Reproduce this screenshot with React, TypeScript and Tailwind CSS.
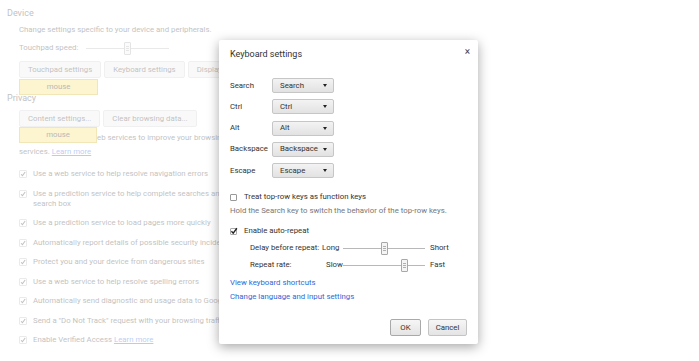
import React from 'react'

const checks = [
  ['Use a web service to help resolve navigation errors'],
  ['Use a prediction service to help complete searches and URLs typed in the address bar or the app launcher', 'search box'],
  ['Use a prediction service to load pages more quickly'],
  ['Automatically report details of possible security incidents to Google'],
  ['Protect you and your device from dangerous sites'],
  ['Use a web service to help resolve spelling errors'],
  ['Automatically send diagnostic and usage data to Google'],
  ['Send a "Do Not Track" request with your browsing traffic'],
]

const keys = ['Search', 'Ctrl', 'Alt', 'Backspace', 'Escape']

const Tick = ({ className = '' }: { className?: string }) => (
  <svg viewBox="0 0 10 10" className={className}>
    <path d="M1.8 5.4 L4 7.8 L8.6 1.6" fill="none" stroke="currentColor" strokeWidth="1.7" />
  </svg>
)

const GhostButton = ({ children }: { children: React.ReactNode }) => (
  <div className="h-[17px] px-[8px] flex items-center border border-[#d0d0d0] bg-[#ededed] rounded-[2px] whitespace-nowrap">
    {children}
  </div>
)

const Slider = ({ pos, width = 82 }: { pos: number; width?: number }) => (
  <div className="relative h-[14px] flex items-center" style={{ width }}>
    <div className="w-full h-px bg-[#b8b8b8]" />
    <div
      className="absolute top-[1px] w-[7px] h-[13px] border border-[#a8a8a8] bg-[#f5f5f5] rounded-[1px] flex flex-col items-center justify-center gap-[1px]"
      style={{ left: pos }}
    >
      <div className="w-[3px] h-px bg-[#b0b0b0]" />
      <div className="w-[3px] h-px bg-[#b0b0b0]" />
      <div className="w-[3px] h-px bg-[#b0b0b0]" />
    </div>
  </div>
)

const Select = ({ value }: { value: string }) => (
  <div className="w-[62px] h-[15px] flex items-center justify-between pl-[7px] pr-[6px] border border-[#c6c6c6] rounded-[2px] bg-gradient-to-b from-[#f3f3f3] to-[#e2e2e2] text-[#333]">
    <span>{value}</span>
    <span className="w-0 h-0 border-l-[2.5px] border-r-[2.5px] border-t-[3px] border-l-transparent border-r-transparent border-t-[#222]" />
  </div>
)

const BgCheck = () => (
  <div className="mt-[1px] w-[8px] h-[8px] border border-[#bbb] rounded-[1px] flex items-center justify-center text-[#333]">
    <Tick className="w-[8px] h-[8px]" />
  </div>
)

export default function App() {
  return (
    <div
      className="relative w-[699px] h-[361px] overflow-hidden bg-white text-[7.8px] leading-[10px]"
      style={{ fontFamily: 'Roboto, "Noto Sans", sans-serif' }}
    >
      {/* settings page behind the dialog */}
      <div className="opacity-30 text-[#303030] pt-[7px]">
        <div className="pl-[7px] text-[9px] leading-[12px]">Device</div>
        <div className="pl-[19px] pt-[6px] flex flex-col">
          <div className="whitespace-nowrap">Change settings specific to your device and peripherals.</div>
          <div className="mt-[7px] h-[12px] flex items-center gap-[8px] whitespace-nowrap">
            <span>Touchpad speed:</span>
            <Slider pos={38} width={83} />
          </div>
          <div className="pt-[7px] flex gap-[3px]">
            <GhostButton>Touchpad settings</GhostButton>
            <GhostButton>Keyboard settings</GhostButton>
            <GhostButton>Display settings</GhostButton>
          </div>
        </div>
        <div className="pl-[7px] pt-[14px] text-[9px] leading-[12px]">Privacy</div>
        <div className="pl-[19px] pt-[6px] flex flex-col">
          <div className="flex gap-[3px]">
            <GhostButton>Content settings...</GhostButton>
            <GhostButton>Clear browsing data...</GhostButton>
          </div>
          <div className="pt-[4px] leading-[14px] whitespace-nowrap">
            Chrome OS may use web services to improve your browsing experience. You may optionally disable these
            <br />
            services. <span className="text-[#1a57d6] underline">Learn more</span>
          </div>
          <div className="pt-[10px] flex flex-col gap-[9.5px]">
            {checks.map((lines, i) => (
              <div key={i} className="flex items-start gap-[6px] whitespace-nowrap">
                <BgCheck />
                <div>
                  {lines.map((l) => (
                    <div key={l}>{l}</div>
                  ))}
                </div>
              </div>
            ))}
            <div className="flex items-start gap-[6px] whitespace-nowrap">
              <BgCheck />
              <div>
                Enable Verified Access <span className="text-[#1a57d6] underline">Learn more</span>
              </div>
            </div>
          </div>
        </div>
      </div>

      {/* hover tooltips */}
      <div className="absolute left-[19px] top-[79px] w-[79px] h-[16px] bg-[#fdf5cf] border border-[#f1e6b8] flex items-center justify-center text-[#b9b9b9]">
        mouse
      </div>
      <div className="absolute left-[19px] top-[127px] w-[78px] h-[16px] bg-[#fdf5cf] border border-[#f1e6b8] flex items-center justify-center text-[#b9b9b9]">
        mouse
      </div>

      {/* Keyboard settings dialog */}
      <div className="absolute left-[219px] top-[40px] w-[259px] h-[304px] bg-white rounded-[2px] shadow-[0_3px_12px_rgba(0,0,0,0.35)] text-[#333] flex flex-col">
        <div className="flex items-start justify-between pl-[11px] pr-[8px] pt-[8px]">
          <div className="text-[9px] leading-[12px] text-[#333]">Keyboard settings</div>
          <div className="text-[10px] leading-[8px] text-[#444]">×</div>
        </div>

        <div className="pl-[11px] pt-[18px] flex flex-col gap-[6.3px]">
          {keys.map((k) => (
            <div key={k} className="flex items-center h-[15px]">
              <div className="w-[42px] whitespace-nowrap">{k}</div>
              <Select value={k} />
            </div>
          ))}
        </div>

        <div className="pl-[11px] pt-[14px] flex flex-col">
          <div className="flex items-center gap-[7px]">
            <div className="w-[7px] h-[7px] border border-[#999] rounded-[1px]" />
            <span>Treat top-row keys as function keys</span>
          </div>
          <div className="pt-[4px] text-[#777]">Hold the Search key to switch the behavior of the top-row keys.</div>
          <div className="pt-[10px] flex items-center gap-[7px]">
            <div className="w-[7px] h-[7px] border border-[#aaa] rounded-[1px] flex items-center justify-center text-[#222]">
              <Tick className="w-[8px] h-[8px] shrink-0" />
            </div>
            <span>Enable auto-repeat</span>
          </div>
          <div className="pl-[20px] pt-[5px] flex flex-col gap-[3px]">
            <div className="flex items-center">
              <span className="w-[72px] whitespace-nowrap">Delay before repeat:</span>
              <span className="w-[21px]">Long</span>
              <Slider pos={38} />
              <span className="pl-[5px]">Short</span>
            </div>
            <div className="flex items-center">
              <span className="w-[72px]">Repeat rate:</span>
              <span className="w-[21px] pl-[4px]">Slow</span>
              <Slider pos={58} />
              <span className="pl-[5px]">Fast</span>
            </div>
          </div>
          <div className="pt-[6px] flex flex-col gap-[4px] text-[#3367d6]">
            <span>View keyboard shortcuts</span>
            <span>Change language and input settings</span>
          </div>
        </div>

        <div className="mt-auto pb-[8px] pr-[11px] flex justify-end gap-[7px]">
          <div className="w-[31px] h-[17px] flex items-center justify-center border border-[#a9a9a9] rounded-[2px] bg-gradient-to-b from-[#f6f6f6] to-[#e4e4e4]">
            OK
          </div>
          <div className="w-[39px] h-[17px] flex items-center justify-center border border-[#c4c4c4] rounded-[2px] bg-gradient-to-b from-[#f6f6f6] to-[#e4e4e4]">
            Cancel
          </div>
        </div>
      </div>
    </div>
  )
}
